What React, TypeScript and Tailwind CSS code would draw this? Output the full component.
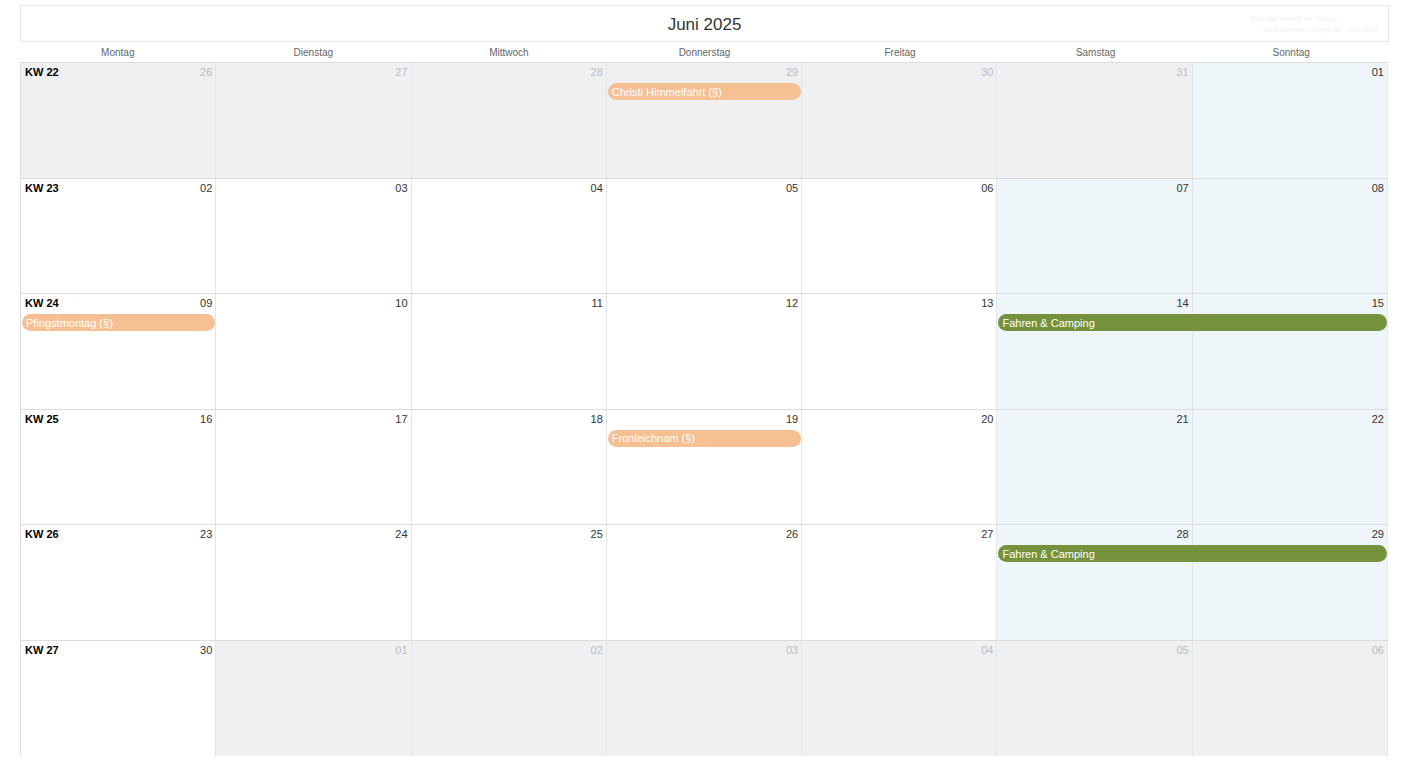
import React from "react";

type Day = { n: string; out?: boolean; weekend?: boolean };
type Ev = { title: string; start: number; span: number; kind: "holiday" | "trip" };
type Week = { kw: number; days: Day[]; events: Ev[] };

const dayNames = ["Montag", "Dienstag", "Mittwoch", "Donnerstag", "Freitag", "Samstag", "Sonntag"];

const colStart = ["col-start-1", "col-start-2", "col-start-3", "col-start-4", "col-start-5", "col-start-6", "col-start-7"];
const colSpan = ["col-span-1", "col-span-2", "col-span-3"];

const mk = (nums: string[], outMask: boolean[]): Day[] =>
  nums.map((n, i) => ({ n, out: outMask[i], weekend: i >= 5 }));

const weeks: Week[] = [
  {
    kw: 22,
    days: mk(["26", "27", "28", "29", "30", "31", "01"], [true, true, true, true, true, true, false]),
    events: [{ title: "Christi Himmelfahrt (§)", start: 3, span: 1, kind: "holiday" }],
  },
  { kw: 23, days: mk(["02", "03", "04", "05", "06", "07", "08"], Array(7).fill(false)), events: [] },
  {
    kw: 24,
    days: mk(["09", "10", "11", "12", "13", "14", "15"], Array(7).fill(false)),
    events: [
      { title: "Pfingstmontag (§)", start: 0, span: 1, kind: "holiday" },
      { title: "Fahren & Camping", start: 5, span: 2, kind: "trip" },
    ],
  },
  {
    kw: 25,
    days: mk(["16", "17", "18", "19", "20", "21", "22"], Array(7).fill(false)),
    events: [{ title: "Fronleichnam (§)", start: 3, span: 1, kind: "holiday" }],
  },
  {
    kw: 26,
    days: mk(["23", "24", "25", "26", "27", "28", "29"], Array(7).fill(false)),
    events: [{ title: "Fahren & Camping", start: 5, span: 2, kind: "trip" }],
  },
  {
    kw: 27,
    days: mk(["30", "01", "02", "03", "04", "05", "06"], [false, true, true, true, true, true, true]),
    events: [],
  },
];

function cellBg(d: Day) {
  if (d.out) return "bg-[#eff0f2]";
  if (d.weekend) return "bg-[#eef6fa]";
  return "bg-white";
}

function WeekRow({ week, last }: { week: Week; last: boolean }) {
  return (
    <div className={`grid grid-cols-7 grid-rows-[20px_18px_1fr] h-[115.5px] ${last ? "" : "border-b border-[#dcdcdc]"}`}>
      {week.days.map((d, i) => (
        <div
          key={i}
          className={`${colStart[i]} row-start-1 row-span-3 flex items-start justify-between px-[3px] pt-[3px] ${cellBg(d)} ${
            i < 6 ? "border-r border-[#e2e4e6]" : "border-r border-[#e4eaee]"
          }`}
        >
          <span className="pl-[1px] text-[11px] font-bold leading-[13px] text-black">{i === 0 ? `KW ${week.kw}` : ""}</span>
          <span className={`text-[11px] leading-[13px] ${d.out ? "text-[#b9bcc0]" : "text-[#333]"}`}>{d.n}</span>
        </div>
      ))}
      {week.events.map((e, i) => (
        <div
          key={i}
          className={`${colStart[e.start]} ${colSpan[e.span - 1]} row-start-2 z-10 mx-[1px] flex h-[17px] items-center rounded-full px-[4px] pt-[1px] text-[11px] leading-none text-white ${
            e.kind === "holiday" ? "bg-[#f7c093]" : "bg-[#76913c]"
          }`}
        >
          {e.title}
        </div>
      ))}
    </div>
  );
}

export default function App() {
  return (
    <div className="min-h-[775px] bg-white font-['Liberation_Sans',Arial,sans-serif]">
      <div className="ml-[20px] w-[1369px] pt-[5px]">
        <div className="flex h-[37px] items-center border border-[#e5e5e5]">
          <div className="w-[200px]" />
          <div className="flex-1 pt-[3px] text-center text-[17px] text-[#333]">Juni 2025</div>
          <div className="flex w-[200px] flex-col items-end gap-[4px] pr-[10px] text-[7px] leading-[7px] text-[#f2f2f2]">
            <span className="pr-[40px]">Kalender erstellt mit Vorlage</span>
            <span>www.kalender-vorlage.de · Juni 2025</span>
          </div>
        </div>
        <div className="grid h-[20px] grid-cols-7 items-center">
          {dayNames.map((d) => (
            <div key={d} className="text-center text-[10px] text-[#666]">
              {d}
            </div>
          ))}
        </div>
        <div className="w-[1368px] border-l border-t border-[#dcdcdc]">
          {weeks.map((w, i) => (
            <WeekRow key={w.kw} week={w} last={i === weeks.length - 1} />
          ))}
        </div>
      </div>
    </div>
  );
}
